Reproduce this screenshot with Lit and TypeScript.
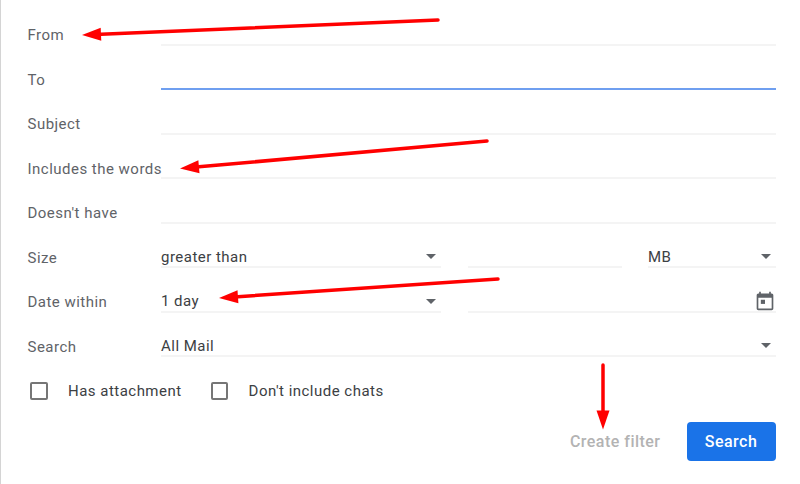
import { LitElement, html, css, svg } from "lit";
import { customElement } from "lit/decorators.js";

@customElement("app-root")
export class AppRoot extends LitElement {
  static styles = css`
    :host {
      display: block;
      position: relative;
      width: 800px;
      height: 484px;
      box-sizing: border-box;
      background: #fff;
      border-left: 1.5px solid #d4d4d4;
      padding: 1px 24.5px 0 26.5px;
      overflow: hidden;
      font-family: Roboto, "Liberation Sans", sans-serif;
      font-size: 15px;
      letter-spacing: 0.48px;
      color: #3c4043;
      white-space: nowrap;
    }
    .row {
      display: grid;
      grid-template-columns: 133.5px 1fr;
      height: 44.5px;
    }
    .label {
      color: #5f6368;
      align-self: end;
      line-height: 22px;
      height: 22px;
      margin-bottom: -0.5px;
    }
    .fields {
      display: flex;
      min-width: 0;
    }
    .field {
      position: relative;
      box-sizing: border-box;
      flex: 1 1 0;
      min-width: 0;
      height: 100%;
      border-bottom: 2px solid #f4f4f4;
      display: flex;
      align-items: flex-end;
      justify-content: space-between;
      line-height: 22px;
    }
    .field.active {
      border-bottom: 2px solid #6f9ff0;
    }
    .select-main {
      flex: 0 0 280px;
      margin-right: 27px;
    }
    .input-num {
      flex: 0 0 153.5px;
      margin-right: 26.5px;
    }
    .value {
      position: relative;
      top: 1.5px;
    }
    .caret {
      width: 0;
      height: 0;
      border-left: 5px solid transparent;
      border-right: 5px solid transparent;
      border-top: 5px solid #5f6368;
      margin: 0 5px 7px 0;
    }
    .cal {
      width: 20px;
      height: 20px;
      margin: 0 0.5px 0 0;
      fill: #5f6368;
      display: block;
    }
    .checks {
      display: flex;
      align-items: flex-end;
      height: 44.5px;
    }
    .check {
      display: flex;
      align-items: center;
      height: 22px;
      margin-bottom: -0.5px;
    }
    .box {
      box-sizing: border-box;
      width: 17.5px;
      height: 17.5px;
      border: 2px solid #767676;
      border-radius: 2px;
      margin: 0 20.5px 0 2.5px;
    }
    .check + .check {
      margin-left: 26.5px;
    }
    .actions {
      display: flex;
      justify-content: flex-end;
      align-items: center;
      margin-top: 20px;
    }
    .filter {
      color: #b3b3b3;
      font-size: 16px;
      font-weight: 500;
      margin-right: 26px;
    }
    .search {
      width: 89px;
      height: 39.5px;
      border-radius: 4px;
      background: #1a73e8;
      color: #fff;
      font-size: 16px;
      font-weight: 500;
      display: flex;
      align-items: center;
      justify-content: center;
    }
    .arrows {
      position: absolute;
      left: -1.5px;
      top: 0;
      width: 800px;
      height: 484px;
      pointer-events: none;
    }
    .arrows line {
      stroke: #f00;
      stroke-width: 3.5;
      stroke-linecap: round;
    }
    .arrows polygon {
      fill: #f00;
    }
  `;

  private caret() {
    return html`<span class="caret"></span>`;
  }

  private row(label: string, content: unknown) {
    return html`<div class="row">
      <div class="label">${label}</div>
      <div class="fields">${content}</div>
    </div>`;
  }

  private arrow(x1: number, y1: number, x2: number, y2: number) {
    const dx = x2 - x1;
    const dy = y2 - y1;
    const len = Math.hypot(dx, dy);
    const ux = dx / len;
    const uy = dy / len;
    const bx = x2 - ux * 19;
    const by = y2 - uy * 19;
    const px = -uy * 6.5;
    const py = ux * 6.5;
    return svg`<line x1=${x1} y1=${y1} x2=${bx} y2=${by}></line>
      <polygon points="${x2},${y2} ${bx + px},${by + py} ${bx - px},${by - py}"></polygon>`;
  }

  render() {
    return html`
      ${this.row("From", html`<div class="field"></div>`)}
      ${this.row("To", html`<div class="field active"></div>`)}
      ${this.row("Subject", html`<div class="field"></div>`)}
      ${this.row("Includes the words", html`<div class="field"></div>`)}
      ${this.row("Doesn't have", html`<div class="field"></div>`)}
      ${this.row(
        "Size",
        html`<div class="field select-main"><span class="value">greater than</span>${this.caret()}</div>
          <div class="field input-num"></div>
          <div class="field"><span class="value">MB</span>${this.caret()}</div>`
      )}
      ${this.row(
        "Date within",
        html`<div class="field select-main"><span class="value">1 day</span>${this.caret()}</div>
          <div class="field">
            <span></span>
            <svg class="cal" viewBox="0 0 24 24">
              <path d="M20 3h-1V1h-2v2H7V1H5v2H4c-1.1 0-2 .9-2 2v16c0 1.1.9 2 2 2h16c1.1 0 2-.9 2-2V5c0-1.100-.9-2-2-2zm0 18H4V8h16v13z"></path>
              <path d="M7 10.500h5v5H7z"></path>
            </svg>
          </div>`
      )}
      ${this.row("Search", html`<div class="field"><span class="value">All Mail</span>${this.caret()}</div>`)}
      <div class="checks">
        <div class="check"><span class="box"></span>Has attachment</div>
        <div class="check"><span class="box"></span>Don't include chats</div>
      </div>
      <div class="actions">
        <span class="filter">Create filter</span>
        <div class="search">Search</div>
      </div>
      <svg class="arrows" viewBox="0 0 800 484">
        ${this.arrow(438, 20, 82, 35)}
        ${this.arrow(487, 141, 180, 168.500)}
        ${this.arrow(498, 279, 219, 298)}
        ${this.arrow(603, 365, 603, 429.500)}
      </svg>
    `;
  }
}
